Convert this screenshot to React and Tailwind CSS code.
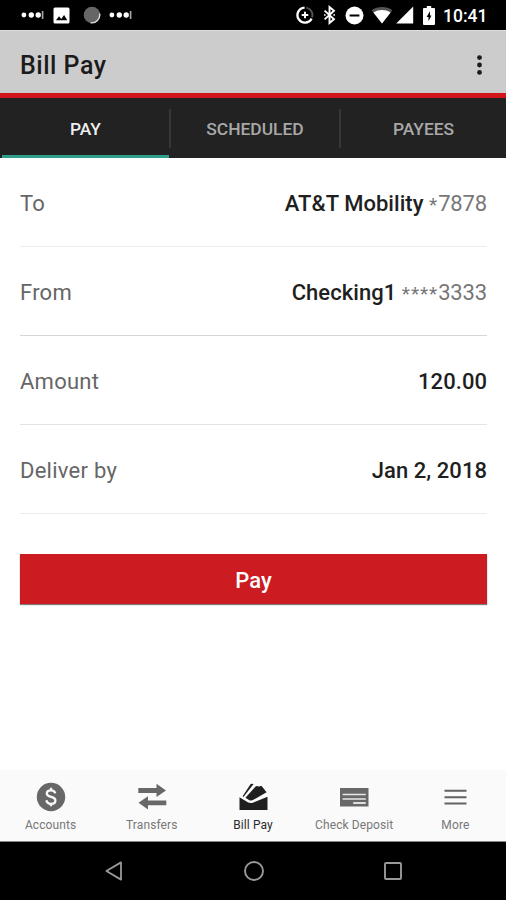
import React from 'react';
import clsx from 'clsx';

const FIELDS = [
  { label: 'To', value: 'AT&T Mobility', mask: '*', digits: '7878', line: 'bg-[#ededed]' },
  { label: 'From', value: 'Checking1', mask: '****', digits: '3333', line: 'bg-[#d6d6d6]' },
  { label: 'Amount', value: '120.00', line: 'bg-[#e4e4e4]' },
  { label: 'Deliver by', value: 'Jan 2, 2018', line: 'bg-[#ebebeb]' },
];

const TABS = ['PAY', 'SCHEDULED', 'PAYEES'];

const MoreDots = () => (
  <svg width="23" height="8" viewBox="0 0 23 8" fill="#fff" className="shrink-0">
    <circle cx="2.9" cy="4" r="2.4" />
    <circle cx="10.3" cy="4" r="2.7" />
    <circle cx="17.2" cy="4" r="2.7" />
    <rect x="20.8" y="-1" width="1.6" height="10" fill="#aaa" />
  </svg>
);

const StatusBar = () => (
  <div className="flex h-[30px] items-center bg-black pl-[21px] text-white">
    <MoreDots />
    <svg width="17" height="17" viewBox="0 0 17 17" className="ml-[9px] shrink-0">
      <rect x=".5" y=".5" width="16" height="16" rx="1.5" fill="#fff" />
      <path d="M3 13.2 6 9.3l2.2 2.6 2.9-3.9 3.2 5.2z" fill="#000" />
    </svg>
    <svg width="18" height="18" viewBox="0 0 18 18" className="ml-[13px] shrink-0">
      <circle cx="9" cy="9" r="8.3" fill="#666" />
      <path d="M16.6 7.5A8 8 0 0 1 7.6 16.8" fill="none" stroke="#ddd" strokeWidth="1.4" />
    </svg>
    <div className="ml-[8px] flex">
      <MoreDots />
    </div>
    <svg width="18" height="18" viewBox="0 0 18 18" fill="none" stroke="#fff" className="ml-[164px] shrink-0">
      <path d="M8.6 1.6A7.5 7.5 0 1 0 15.6 12.6" strokeWidth="2.3" />
      <path d="M10.4 1.6A7.5 7.5 0 0 1 16 11.4" strokeWidth="1.9" stroke="#555" />
      <path d="M9 5.7v6.6M5.7 9h6.6" strokeWidth="2" />
    </svg>
    <svg width="13" height="20" viewBox="0 0 13 20" fill="none" stroke="#fff" strokeWidth="1.9" className="ml-[9px] shrink-0">
      <path d="M1.6 5.6 11 14.2 6.5 18V2L11 5.8 1.6 14.4" />
      <path d="M1 10h1.6M10.4 10H12" strokeWidth="1.6" />
    </svg>
    <svg width="19" height="19" viewBox="0 0 19 19" className="ml-[9px] shrink-0">
      <circle cx="9.5" cy="9.5" r="9" fill="#fff" />
      <rect x="4.6" y="8.5" width="9.8" height="2" fill="#000" />
    </svg>
    <svg width="22" height="18" viewBox="0 0 22 18" className="ml-[7px] shrink-0">
      <path d="M11 17.5.6 4.2C6.8-.2 15.2-.2 21.4 4.2z" fill="#555" />
      <path d="M11 17.5 2.4 6.5C7.2 3.2 14.8 3.2 19.6 6.5z" fill="#fff" />
    </svg>
    <svg width="18" height="18" viewBox="0 0 18 18" className="ml-[3px] shrink-0">
      <path d="M17.2.6v17H.2z" fill="#fff" />
    </svg>
    <svg width="12" height="19" viewBox="0 0 12 19" className="ml-[9px] shrink-0">
      <path d="M3.8 0h4.4v2H11q1 0 1 1v15q0 1-1 1H1q-1 0-1-1V3q0-1 1-1h2.8z" fill="#fff" />
      <path d="M7 5.2 3.6 11h1.9v4.2L8.5 9.4H7z" fill="#000" />
    </svg>
    <span className="ml-[8px] mt-[2px] text-[17.5px] leading-5 font-medium">10:41</span>
  </div>
);

const Header = () => (
  <div className="flex h-[63px] items-center justify-between border-t border-[#dedede] bg-[#cccccc] pr-[23px] pl-[20px]">
    <h1 className="mt-[8px] text-[25px] leading-8 font-medium tracking-[0.5px] text-[#1b1b1b]">Bill Pay</h1>
    <svg width="7" height="20" viewBox="0 0 7 20" fill="#1b1b1b" className="mt-[6px]">
      <circle cx="3.5" cy="2.6" r="2.4" />
      <circle cx="3.5" cy="10" r="2.4" />
      <circle cx="3.5" cy="17.4" r="2.4" />
    </svg>
  </div>
);

const Tabs = () => (
  <div className="grid h-[60px] grid-cols-[171px_170px_165px] bg-[#222222]">
    {TABS.map((tab, i) => (
      <div key={tab} className="flex flex-col">
        <div
          className={clsx(
            'mt-[11px] flex h-[39px] items-center justify-center pt-[2px] text-[17.4px] font-medium',
            i === 0 ? 'pl-[2px] text-[#eeeeee]' : 'text-[#a8a8a8]',
            i < 2 && 'border-r-2 border-[#373737]',
          )}
        >
          {tab}
        </div>
        {i === 0 && <div className="mt-auto mr-[2px] ml-[2px] h-[3px] bg-[#2f9e8b]" />}
      </div>
    ))}
  </div>
);

const Field = ({ label, value, mask, digits, line }) => (
  <div className="flex h-[89px] flex-col">
    <div className="flex flex-1 items-center justify-between pt-[3px] text-[22px]">
      <span className="tracking-[0.25px] text-[#666666]">{label}</span>
      <span className="flex items-center">
        <span className="font-medium tracking-[0.05px] text-[#1f1f1f]">{value}</span>
        {digits && (
          <span className="ml-[5.5px] flex items-center text-[#777777]">
            <span className="mt-[3px] text-[19px] leading-6 tracking-[0.9px]">{mask}</span>
            <span className="tracking-[-0.15px]">{digits}</span>
          </span>
        )}
      </span>
    </div>
    <div className={clsx('h-px', line)} />
  </div>
);

const AccountsIcon = () => (
  <svg width="30" height="30" viewBox="0 0 30 30">
    <circle cx="15" cy="15" r="14.2" fill="#686868" />
    <path
      d="M19.2 11.4C18.8 9.3 17.2 8.3 15 8.3c-2.4 0-4.2 1.2-4.2 3.2 0 4.6 8.6 2.3 8.6 6.9 0 2.1-1.9 3.4-4.4 3.4-2.5 0-4.2-1.2-4.6-3.5M15 5.8v2.6M15 21.6v2.7"
      fill="none"
      stroke="#fafafa"
      strokeWidth="2.3"
    />
  </svg>
);

const TransfersIcon = () => (
  <svg width="30" height="30" viewBox="0 0 30 30" fill="#686868">
    <path d="M1.3 6.1h18.2V1.8L29 8.4l-9.5 6.6v-4.1H1.3zM29.3 18.5H11V14.2L1.5 20.8 11 27.4v-4.1h18.3z" />
  </svg>
);

const BillPayIcon = () => (
  <svg width="30" height="30" viewBox="0 0 30 30" fill="#1f1f1f">
    <path d="M1.5 15.2 10.2 20.6Q13 21.6 15.4 20.5L29.5 14.8V28h-28z" />
    <path d="M7.4 15.8 17.6 4.6Q18.4 3.7 19.6 4.3Q21.6 4.7 23.4 3.8L28.6 10.2 15.4 17.8Q13.4 18.9 11.4 18.2z" />
    <path d="M4.6 14.2 12.3 2.6Q13.2 1.2 15.6 2L6.8 13.2 5.6 15z" />
  </svg>
);

const CheckDepositIcon = () => (
  <svg width="30" height="30" viewBox="0 0 30 30">
    <rect x="1" y="6" width="28.5" height="18.5" fill="#686868" />
    <path d="M3.6 12.6h23.2M3.6 16.9h23.2" stroke="#e6e6e6" strokeWidth="1.5" />
    <path d="M14.2 21h12.6" stroke="#e6e6e6" strokeWidth="1.9" />
  </svg>
);

const MenuIcon = () => (
  <svg width="30" height="30" viewBox="0 0 30 30">
    <path d="M4.5 8.7h22M4.5 15.3h22M4.5 21.4h22" stroke="#626262" strokeWidth="2" />
  </svg>
);

const NAV = [
  { label: 'Accounts', Icon: AccountsIcon },
  { label: 'Transfers', Icon: TransfersIcon },
  { label: 'Bill Pay', Icon: BillPayIcon, active: true },
  { label: 'Check Deposit', Icon: CheckDepositIcon },
  { label: 'More', Icon: MenuIcon },
];

const BottomNav = () => (
  <div className="grid h-[72px] grid-cols-5 border-b border-[#888888] bg-[#fafafa]">
    {NAV.map(({ label, Icon, active }) => (
      <div key={label} className="flex flex-col items-center pt-[12px]">
        <Icon />
        <span
          className={clsx(
            'mt-[5px] text-[12px] leading-4 tracking-[0.1px] whitespace-nowrap',
            active ? 'text-[#2a2a2a]' : 'text-[#777777]',
          )}
        >
          {label}
        </span>
      </div>
    ))}
  </div>
);

const SystemNav = () => (
  <div className="flex h-[58px] items-center justify-between bg-black pr-[103px] pl-[104px]">
    <svg width="20" height="22" viewBox="0 0 20 22" fill="none" stroke="#999" strokeWidth="1.8">
      <path d="M17 2.4v17.2L2.4 11z" strokeLinejoin="round" />
    </svg>
    <svg width="22" height="22" viewBox="0 0 22 22" fill="none" stroke="#999" strokeWidth="1.9">
      <circle cx="11" cy="11" r="9" />
    </svg>
    <svg width="20" height="20" viewBox="0 0 20 20" fill="none" stroke="#999" strokeWidth="1.9">
      <rect x="2" y="2" width="16" height="16" rx="1" />
    </svg>
  </div>
);

const App = () => (
  <div className="flex h-[900px] w-[506px] flex-col overflow-hidden bg-white font-[Roboto,sans-serif]">
    <StatusBar />
    <Header />
    <div className="h-[5px] bg-[#d3161c]" />
    <Tabs />
    <main className="flex-1 pr-[19px] pl-[20px]">
      {FIELDS.map((field) => (
        <Field key={field.label} {...field} />
      ))}
      <button className="mt-[40px] block h-[50px] w-full bg-[#cc1c22] pt-[2px] text-[22px] font-medium text-white shadow-[0_1px_1px_rgba(0,0,0,0.5)]">
        Pay
      </button>
    </main>
    <BottomNav />
    <SystemNav />
  </div>
);

export default App;
